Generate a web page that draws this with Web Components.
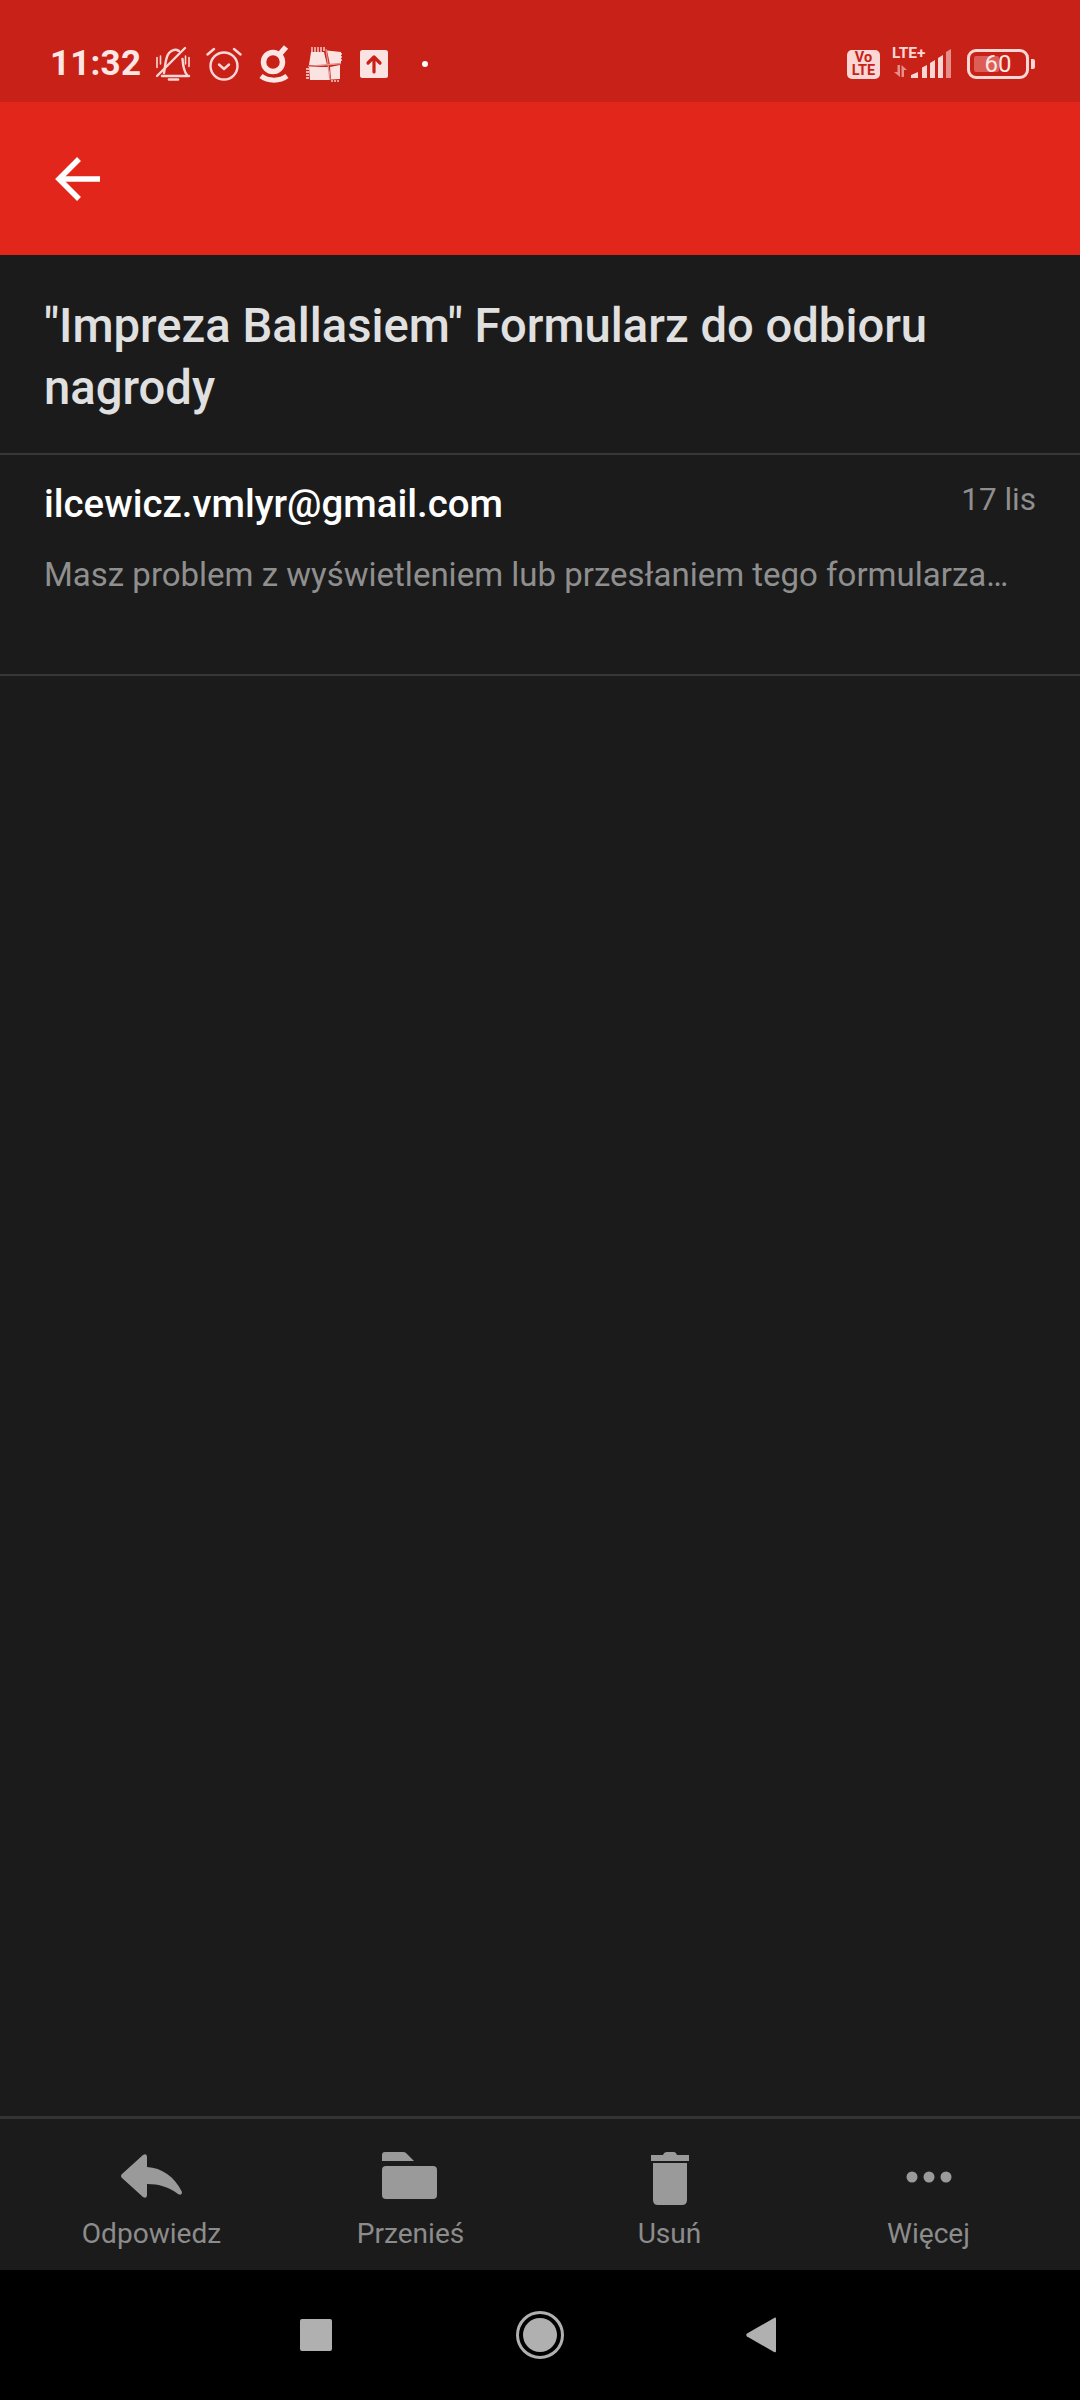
<!DOCTYPE html>
<html lang="pl">
<head>
<meta charset="utf-8">
<title>Poczta</title>
<style>
    html, body { margin: 0; padding: 0; background: #1b1b1b; }
    body { width: 1080px; height: 2400px; font-family: Roboto, "Noto Sans", sans-serif; }
</style>
</head>
<body>
<mail-screen>
    <status-bar slot="status"></status-bar>
    <app-bar slot="top"></app-bar>
    <mail-subject slot="subject">"Impreza Ballasiem" Formularz do odbioru nagrody</mail-subject>
    <mail-row slot="rows" sender="ilcewicz.vmlyr@gmail.com" date="17 lis">Masz problem z wyświetleniem lub przesłaniem tego formularza…</mail-row>
    <action-bar slot="actions">
        <action-item label="Odpowiedz" icon="reply"></action-item>
        <action-item label="Przenieś" icon="folder"></action-item>
        <action-item label="Usuń" icon="trash"></action-item>
        <action-item label="Więcej" icon="more"></action-item>
    </action-bar>
    <nav-bar slot="nav"></nav-bar>
</mail-screen>

<script>
// Whole screen: column with the empty list area taking what is left
class MailScreen extends HTMLElement {
    constructor() {
        super();
        this.attachShadow({ mode: 'open' }).innerHTML = `
            <style>
                :host { display: flex; flex-direction: column; width: 1080px; height: 2400px; background: #1b1b1b; }
                .fill { flex: 1; }
            </style>
            <slot name="status"></slot>
            <slot name="top"></slot>
            <slot name="subject"></slot>
            <slot name="rows"></slot>
            <div class="fill"></div>
            <slot name="actions"></slot>
            <slot name="nav"></slot>
        `;
    }
}

class StatusBar extends HTMLElement {
    constructor() {
        super();
        this.attachShadow({ mode: 'open' }).innerHTML = `
            <style>
                :host { display: flex; align-items: center; box-sizing: border-box; height: 102px; padding: 26px 45px 0 50px; background: #c82118; color: #fde6e4; }
                svg { display: block; flex: none; }
                .time { font: 700 35px/40px Roboto, sans-serif; width: 106px; letter-spacing: 0.2px; }
                .left { display: flex; align-items: center; flex: 1; }
                .volte { display: flex; flex-direction: column; align-items: center; justify-content: center; width: 33px; height: 29px; border-radius: 5px; background: #fad7d4; color: #c82118; font: 700 14.5px/13px Roboto, sans-serif; }
                .net { position: relative; width: 60px; height: 30px; margin-left: 12px; }
                .lte { position: absolute; left: 0; top: -4px; font: 700 15.5px/16px Roboto, sans-serif; color: #fad7d4; }
                .net svg { position: absolute; left: 0; top: 0; }
                .batt { display: flex; align-items: center; margin-left: 15px; }
                .shell { display: flex; align-items: center; justify-content: center; position: relative; box-sizing: border-box; width: 62px; height: 30px; border: 3px solid #fad7d4; border-radius: 9px; }
                .level { position: absolute; left: 4px; top: 4px; bottom: 4px; width: 25px; border-radius: 2px; background: #dc5e57; }
                .num { position: relative; font: 400 24px/24px Roboto, sans-serif; color: #fde6e4; }
                .nub { width: 4px; height: 10px; margin-left: 2px; border-radius: 0 2px 2px 0; background: #fad7d4; }
            </style>
            <div class="left">
                <div class="time">11:32</div>
                <svg width="36" height="36" viewBox="0 0 36 36" fill="none" stroke="#fad7d4" stroke-width="2.4" stroke-linecap="round">
                    <path d="M6 30H33"/>
                    <path d="M8 27C9.5 20 9 12 13 7C16 3.5 20 3 23 5"/>
                    <path d="M26.5 13C27 20 28.5 26 31 29"/>
                    <path d="M1 30L29 2"/>
                    <path d="M13 33.5h9" stroke-width="2.6"/>
                    <path d="M1 11.5v10M4.5 10v8M29.5 10v8M33 11.5v9" stroke-width="1.6"/>
                </svg>
                <svg style="margin-left:14px" width="36" height="36" viewBox="0 0 36 36" fill="none" stroke="#fad7d4" stroke-width="2.4" stroke-linecap="round" stroke-linejoin="round">
                    <circle cx="18" cy="20" r="13.5"/>
                    <path d="M1.5 8.5L8 3M34.5 8.5L28 3"/>
                    <path d="M13 18.5l5 4.5 5-4.5"/>
                </svg>
                <svg style="margin-left:17px" width="30" height="38" viewBox="0 0 30 38" fill="none" stroke="#fde6e4">
                    <circle cx="14" cy="17" r="9.5" stroke-width="5.5"/>
                    <path d="M21 9l6-7" stroke-width="5.5"/>
                    <path d="M2 31c7 5.5 19 5.5 26 0" stroke-width="5"/>
                </svg>
                <svg style="margin-left:17px" width="36" height="36" viewBox="0 0 36 36" fill="none">
                    <g fill="#fbe3e1">
                        <path d="M5 6h13l3 13H3z"/>
                        <path d="M21 4.5l14 1.500v11L24 19z"/>
                        <path d="M3 21h19l2 6v7H4z"/>
                        <path d="M24 21l10-2v14l-9 .5z"/>
                    </g>
                    <g stroke="#fbe3e1" stroke-width="1.3" fill="none">
                        <path d="M6 6V1M9 6V1M12 6V1M15 6V1M18 5V1"/>
                        <path d="M35 8h2M35 11h2M35 14h2"/>
                        <path d="M3 23H0M3 26H0M3 29H0M3 32H0"/>
                        <path d="M26 34v2M29 34v2M32 34v2"/>
                    </g>
                    <path d="M20 3l4 31M2 20.5l33-3" stroke="#e58f8a" stroke-width="1.3"/>
                </svg>
                <svg style="margin-left:17px" width="30" height="30" viewBox="0 0 30 30">
                    <rect x="1" y="1" width="28" height="28" rx="2.5" fill="#fbe3e1"/>
                    <path d="M15 23V10M9 14l6-6 6 6" fill="none" stroke="#c82118" stroke-width="3.2" stroke-linecap="round" stroke-linejoin="round"/>
                </svg>
                <svg style="margin-left:33px" width="6" height="6" viewBox="0 0 6 6"><circle cx="3" cy="3" r="3" fill="#fff"/></svg>
            </div>
            <div class="volte"><span>Vo</span><span>LTE</span></div>
            <div class="net">
                <span class="lte">LTE+</span>
                <svg width="60" height="30" viewBox="0 0 60 30">
                    <path d="M8 16v12l-6-5h3.5v-7zM9.5 16l5.5 5h-3v7H9.5z" fill="#e58f8a"/>
                    <path d="M19 29v-3l7-3v6zM30 29V18.5l5-2.5v13zM38 29V14l5-3v18zM46 29V9l5-3v23z" fill="#fad7d4"/>
                    <path d="M54 29V3l5-3v29z" fill="#e58f8a"/>
                </svg>
            </div>
            <div class="batt">
                <div class="shell"><div class="level"></div><span class="num">60</span></div>
                <div class="nub"></div>
            </div>
        `;
    }
}

class AppBar extends HTMLElement {
    constructor() {
        super();
        this.attachShadow({ mode: 'open' }).innerHTML = `
            <style>
                :host { display: flex; align-items: center; box-sizing: border-box; height: 153px; padding-left: 54px; background: #e2261b; }
                svg { display: block; }
            </style>
            <svg width="48" height="48" viewBox="0 0 48 48" fill="none" stroke="#fff" stroke-width="5.5">
                <path d="M46 24H5"/>
                <path d="M25 4L5 24l20 20"/>
            </svg>
        `;
    }
}

class MailSubject extends HTMLElement {
    constructor() {
        super();
        this.attachShadow({ mode: 'open' }).innerHTML = `
            <style>
                :host { display: block; box-sizing: border-box; height: 200px; padding: 40px 100px 0 44px; border-bottom: 2px solid #373737; font: 500 47.2px/62px Roboto, sans-serif; color: #e0e0e0; }
            </style>
            <slot></slot>
        `;
    }
}

class MailRow extends HTMLElement {
    constructor() {
        super();
        this.attachShadow({ mode: 'open' }).innerHTML = `
            <style>
                :host { display: block; box-sizing: border-box; height: 221px; padding: 24px 44px 0 44px; border-bottom: 2px solid #373737; font-family: Roboto, sans-serif; }
                .head { display: flex; justify-content: space-between; align-items: flex-start; }
                .sender { font: 500 38.4px/50px Roboto, sans-serif; color: #fff; }
                .date { font: 400 31.5px/42px Roboto, sans-serif; color: #8f8f8f; }
                .preview { margin-top: 24px; font: 400 33px/44px Roboto, sans-serif; color: #8f8f8f; white-space: nowrap; }
            </style>
            <div class="head">
                <div class="sender"></div>
                <div class="date"></div>
            </div>
            <div class="preview"><slot></slot></div>
        `;
    }
    connectedCallback() {
        this.shadowRoot.querySelector('.sender').textContent = this.getAttribute('sender');
        this.shadowRoot.querySelector('.date').textContent = this.getAttribute('date');
    }
}

class ActionBar extends HTMLElement {
    constructor() {
        super();
        this.attachShadow({ mode: 'open' }).innerHTML = `
            <style>
                :host { display: grid; grid-template-columns: repeat(4, 1fr); box-sizing: border-box; height: 154px; padding: 29px 22px 0; border-top: 3px solid #343434; background: #1b1b1b; }
            </style>
            <slot></slot>
        `;
    }
}

const ACTION_ICONS = {
    reply: '<path d="M35 9V19C50 20 62 28 70 44Q70 48 66 46C57 39 47 36 35 36V47Q35 51 31 49L10 30Q8 28 10 26L31 7Q35 5 35 9Z"/>',
    folder: '<path d="M11 7Q11 4 14 4H32Q34 4 35 5L43 13H11Z"/><rect x="11" y="18" width="55" height="33" rx="4"/>',
    trash: '<path d="M21 7H33Q34 4 37 4H44Q46 4 47 7H59V13H21Z"/><path d="M23 15H57V52Q57 57 52 57H28Q23 57 23 52Z"/>',
    more: '<circle cx="23" cy="29" r="5.5"/><circle cx="40" cy="29" r="5.5"/><circle cx="57" cy="29" r="5.5"/>'
};

class ActionItem extends HTMLElement {
    constructor() {
        super();
        this.attachShadow({ mode: 'open' }).innerHTML = `
            <style>
                :host { display: flex; flex-direction: column; align-items: center; }
                svg { display: block; fill: #9a9a9a; }
                .label { margin-top: 8px; font: 400 28.1px/36px Roboto, sans-serif; color: #8c8c8c; }
            </style>
            <svg width="80" height="60" viewBox="0 0 80 60"></svg>
            <div class="label"></div>
        `;
    }
    connectedCallback() {
        this.shadowRoot.querySelector('svg').innerHTML = ACTION_ICONS[this.getAttribute('icon')];
        this.shadowRoot.querySelector('.label').textContent = this.getAttribute('label');
    }
}

class NavBar extends HTMLElement {
    constructor() {
        super();
        this.attachShadow({ mode: 'open' }).innerHTML = `
            <style>
                :host { display: flex; align-items: center; justify-content: center; box-sizing: border-box; height: 130px; padding-right: 4px; background: #000; }
                .square { width: 32px; height: 32px; border-radius: 2px; background: #b0b0b0; }
                svg { display: block; }
                .home { margin-left: 184px; }
                .back { margin-left: 181px; }
            </style>
            <div class="square"></div>
            <svg class="home" width="48" height="48" viewBox="0 0 48 48">
                <circle cx="24" cy="24" r="22.5" fill="none" stroke="#b0b0b0" stroke-width="3"/>
                <circle cx="24" cy="24" r="17" fill="#b0b0b0"/>
            </svg>
            <svg class="back" width="32" height="38" viewBox="0 0 32 38">
                <path d="M30 1.5Q31 1 31 3V35Q31 37 29 36L2 20.5Q0.5 19 2 17.5Z" fill="#b0b0b0"/>
            </svg>
        `;
    }
}

customElements.define('mail-screen', MailScreen);
customElements.define('status-bar', StatusBar);
customElements.define('app-bar', AppBar);
customElements.define('mail-subject', MailSubject);
customElements.define('mail-row', MailRow);
customElements.define('action-bar', ActionBar);
customElements.define('action-item', ActionItem);
customElements.define('nav-bar', NavBar);
</script>
</body>
</html>
